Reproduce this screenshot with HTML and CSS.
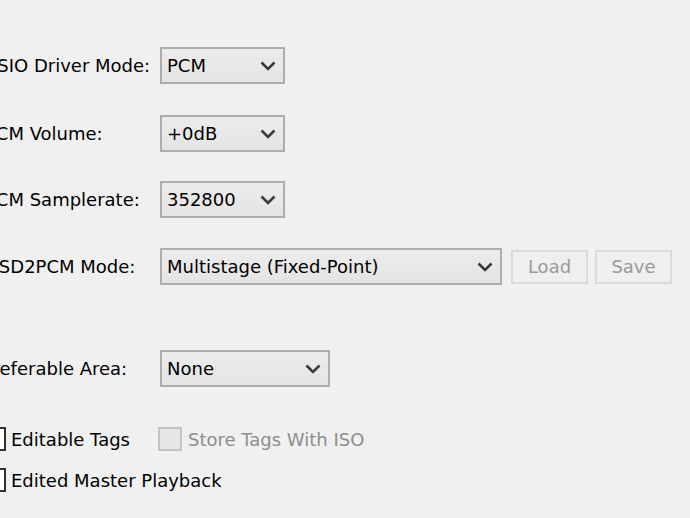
FILE: index.html
```html
<!DOCTYPE html>
<html>
<head>
<meta charset="utf-8">
<link rel="stylesheet" href="styles.css">
</head>
<body>
<div class="page">
  <div class="row r1">
    <span class="label">ASIO Driver Mode:</span>
    <div class="combo w-sm"><span>PCM</span><svg class="chev" viewBox="0 0 16 10"><polyline points="1.5,1.5 8,8 14.5,1.5"/></svg></div>
  </div>
  <div class="row r2">
    <span class="label">PCM Volume:</span>
    <div class="combo w-sm"><span>+0dB</span><svg class="chev" viewBox="0 0 16 10"><polyline points="1.5,1.5 8,8 14.5,1.5"/></svg></div>
  </div>
  <div class="row r3">
    <span class="label">PCM Samplerate:</span>
    <div class="combo w-sm"><span>352800</span><svg class="chev" viewBox="0 0 16 10"><polyline points="1.5,1.5 8,8 14.5,1.5"/></svg></div>
  </div>
  <div class="row r4">
    <span class="label">DSD2PCM Mode:</span>
    <div class="combo w-lg"><span>Multistage (Fixed-Point)</span><svg class="chev" viewBox="0 0 16 10"><polyline points="1.5,1.5 8,8 14.5,1.5"/></svg></div>
    <button class="btn btn-load" disabled>Load</button>
    <button class="btn btn-save" disabled>Save</button>
  </div>
  <div class="row r5">
    <span class="label label-pref">Preferable Area:</span>
    <div class="combo w-md"><span>None</span><svg class="chev" viewBox="0 0 16 10"><polyline points="1.5,1.5 8,8 14.5,1.5"/></svg></div>
  </div>
  <div class="checks c1">
    <label class="check first"><span class="box"></span><span>Editable Tags</span></label>
    <label class="check disabled"><span class="box"></span><span>Store Tags With ISO</span></label>
  </div>
  <div class="checks c2">
    <label class="check"><span class="box"></span><span>Edited Master Playback</span></label>
  </div>
</div>
</body>
</html>
```

FILE: styles.css
```css
html, body {
  margin: 0;
  padding: 0;
  background: #f0f0f0;
  overflow: hidden;
}
body {
  width: 690px;
  height: 518px;
  font-family: "DejaVu Sans", sans-serif;
  font-size: 18px;
  color: #000;
}
.page {
  margin-left: -15px;
  padding-top: 47px;
  display: flex;
  flex-direction: column;
}
.row {
  display: flex;
  align-items: center;
  height: 37px;
}
.r2 { margin-top: 31px; }
.r3 { margin-top: 29px; }
.r4 { margin-top: 30px; }
.r5 { margin-top: 65px; }
.label {
  width: 175px;
  flex: none;
  white-space: nowrap;
}
.label-pref {
  margin-left: -3px;
  width: 178px;
}
.combo {
  box-sizing: border-box;
  height: 37px;
  border: 2px solid #adadad;
  background: linear-gradient(#ececec, #e4e4e4);
  display: flex;
  align-items: center;
  justify-content: space-between;
  padding: 0 7px 0 5px;
  flex: none;
  white-space: nowrap;
}
.w-sm { width: 125px; }
.w-lg { width: 342px; }
.w-md { width: 170px; }
.chev {
  width: 16px;
  height: 10px;
  fill: none;
  stroke: #3a3a3a;
  stroke-width: 2.6;
  flex: none;
}
.btn {
  box-sizing: border-box;
  height: 34px;
  width: 77px;
  border: 2px solid #dadada;
  background: #efefef;
  color: #9a9a9a;
  font: inherit;
  padding: 0;
  flex: none;
}
.btn-load { margin-left: 9px; }
.btn-save { margin-left: 7px; }
.checks {
  display: flex;
  align-items: center;
  height: 24px;
  margin-left: -3px;
}
.c1 { margin-top: 40px; }
.c2 { margin-top: 17px; }
.check {
  display: flex;
  align-items: center;
  white-space: nowrap;
}
.check.first {
  width: 176px;
  flex: none;
}
.box {
  box-sizing: border-box;
  width: 24px;
  height: 24px;
  border: 2px solid #333;
  background: #fff;
  margin-right: 5px;
  flex: none;
}
.check.disabled {
  color: #8d8d8d;
}
.check.disabled .box {
  border-color: #c4c4c4;
  background: #e6e6e6;
  margin-right: 6px;
}
```
